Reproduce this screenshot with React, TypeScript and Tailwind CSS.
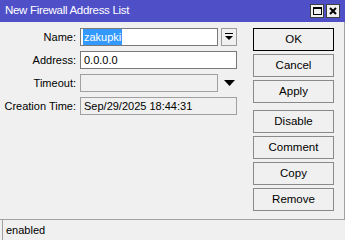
import React from "react";

const Btn = ({ label, def }: { label: string; def?: boolean }) => (
  <div
    className={
      "h-[23px] w-[81px] flex items-center justify-center text-[11.5px] text-black bg-[#f0f0f0] border " +
      (def ? "border-black" : "border-[#8a8a8a]")
    }
  >
    {label}
  </div>
);

export default function App() {
  return (
    <div
      className="w-[345px] h-[240px] bg-[#f0f0f0] flex flex-col overflow-hidden text-black"
      style={{ fontFamily: '"Liberation Sans", Arial, sans-serif' }}
    >
      <div className="h-[22px] bg-[#4f4fc8] flex items-center pl-[5px] pr-[5px] shrink-0">
        <div className="text-white text-[11.5px] tracking-[-0.3px] flex-1">New Firewall Address List</div>
        <div className="flex gap-[2px]">
          <div className="w-[14px] h-[14px] bg-[#f0f0f0] border border-[#404040] flex items-center justify-center">
            <div className="w-[9px] h-[8px] border border-black border-t-[2px]" />
          </div>
          <div className="w-[14px] h-[14px] bg-[#f0f0f0] border border-[#404040] flex items-center justify-center">
            <svg width="8" height="8" viewBox="0 0 8 8">
              <path d="M1 1 L7 7 M7 1 L1 7" stroke="black" strokeWidth="2" />
            </svg>
          </div>
        </div>
      </div>
      <div className="flex-1 flex border-r border-[#a0a0a0]">
        <div className="flex flex-col pt-[6px] gap-[5px] text-[11px]">
          <div className="flex items-center h-[18px]">
            <div className="w-[80px] text-right pr-[4px]">Name:</div>
            <div className="w-[138px] h-[18px] bg-white border border-[#7a7a7a] flex items-center pl-[2px]">
              <span className="bg-[#3399ff] text-white px-[1px]">zakupki</span>
            </div>
            <div className="ml-[3px] w-[16px] h-[18px] border border-[#9a9a9a] bg-[#f0f0f0] flex items-center justify-center">
              <svg width="8" height="8" viewBox="0 0 8 8">
                <rect x="0" y="0" width="8" height="1" fill="black" />
                <path d="M0 3 L8 3 L4 7 Z" fill="black" />
              </svg>
            </div>
          </div>
          <div className="flex items-center h-[18px]">
            <div className="w-[80px] text-right pr-[4px]">Address:</div>
            <div className="w-[157px] h-[18px] bg-white border border-[#7a7a7a] flex items-center pl-[3px]">
              0.0.0.0
            </div>
          </div>
          <div className="flex items-center h-[18px]">
            <div className="w-[80px] text-right pr-[4px]">Timeout:</div>
            <div className="w-[138px] h-[18px] bg-[#f0f0f0] border border-[#a0a0a0]" />
            <div className="ml-[3px] w-[16px] flex items-center justify-center">
              <svg width="11" height="6" viewBox="0 0 11 6">
                <path d="M0 0 L11 0 L5.5 6 Z" fill="black" />
              </svg>
            </div>
          </div>
          <div className="flex items-center h-[18px]">
            <div className="w-[80px] text-right pr-[4px]">Creation Time:</div>
            <div className="w-[157px] h-[18px] bg-[#f0f0f0] border border-[#a0a0a0] flex items-center pl-[3px]">
              Sep/29/2025 18:44:31
            </div>
          </div>
        </div>
        <div className="ml-[16px] pt-[6px] flex flex-col gap-[3px]">
          <Btn label="OK" def />
          <Btn label="Cancel" />
          <Btn label="Apply" />
          <div className="h-[1px]" />
          <Btn label="Disable" />
          <Btn label="Comment" />
          <Btn label="Copy" />
          <Btn label="Remove" />
        </div>
      </div>
      <div className="h-[21px] border-t border-[#a0a0a0] flex items-center">
        <div className="h-full border-l border-[#a0a0a0] ml-[2px] pl-[3px] text-[11px] flex items-center">
          enabled
        </div>
      </div>
    </div>
  );
}
